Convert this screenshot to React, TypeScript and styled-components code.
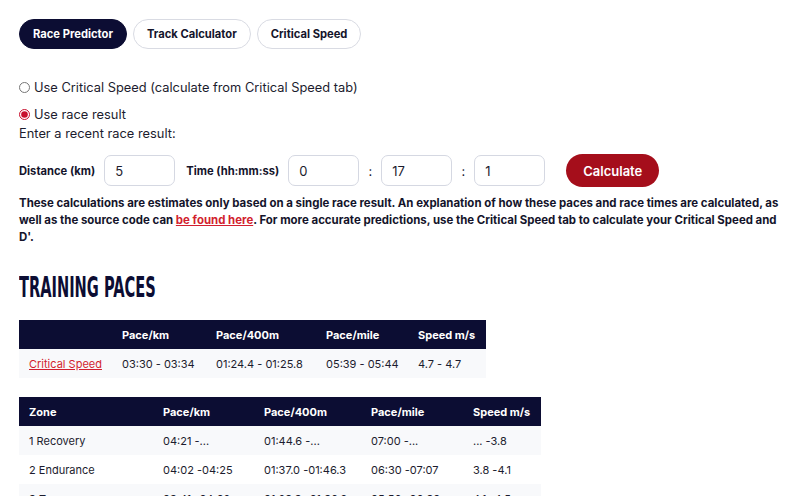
import React, { useState } from 'react';
import styled, { createGlobalStyle } from 'styled-components';

const GlobalStyle = createGlobalStyle`
  body {
    margin: 0;
    background: #ffffff;
    font-family: Inter, "Noto Sans", sans-serif;
    color: #14142b;
  }
`;

const Page = styled.div`
  padding: 19px 21px 0 19px;
  width: 800px;
  box-sizing: border-box;
`;

const Tabs = styled.div`
  display: flex;
  gap: 6px;
`;

const Tab = styled.button<{ active?: boolean }>`
  height: 30px;
  padding: 0 13px;
  border-radius: 15px;
  border: 1px solid ${p => (p.active ? '#0c0d33' : '#d9dbe3')};
  background: ${p => (p.active ? '#0c0d33' : '#ffffff')};
  color: ${p => (p.active ? '#ffffff' : '#14142b')};
  font-family: Inter, sans-serif;
  font-weight: 700;
  font-size: 11.2px;
  cursor: pointer;
`;

const Options = styled.div`
  margin-top: 28px;
  display: flex;
  flex-direction: column;
  gap: 6px;
`;

const RadioLabel = styled.label`
  display: flex;
  align-items: center;
  gap: 4px;
  font-size: 12.85px;
  line-height: 21px;
  color: #1c1c2e;

  input {
    margin: 0;
    width: 11px;
    height: 11px;
    accent-color: #c8102e;
  }
`;

const Prompt = styled.div`
  font-size: 12.85px;
  line-height: 17px;
  margin-top: -6px;
  color: #1c1c2e;
`;

const FormRow = styled.div`
  margin-top: 12px;
  display: flex;
  align-items: center;
`;

const Input = styled.input`
  width: 71px;
  height: 31px;
  box-sizing: border-box;
  border: 1px solid #d5d8e2;
  border-radius: 7px;
  padding: 0 10px;
  font-family: Inter, sans-serif;
  font-size: 13px;
  color: #1c1c2e;
  margin: 0;
`;

const FieldLabel = styled.span`
  font-size: 11.2px;
  font-weight: 700;
  margin-right: 9px;

  ${Input} + & {
    margin-left: 11px;
  }
`;

const Colon = styled.span`
  font-size: 13px;
  width: 22px;
  text-align: center;
`;

const Calculate = styled.button`
  margin-left: 21px;
  height: 33px;
  padding: 0 17px;
  border: none;
  border-radius: 17px;
  background: #a50e1b;
  color: #ffffff;
  font-family: Inter, sans-serif;
  font-size: 13px;
  font-weight: 600;
  cursor: pointer;
`;

const Note = styled.p`
  margin: 8px 0 0;
  font-size: 11.45px;
  font-weight: 700;
  line-height: 17px;
  color: #14142b;

  a {
    color: #d21f2f;
    text-decoration: underline;
  }
`;

const Heading = styled.h2`
  margin: 28px 0 0;
  font-family: "DejaVu Sans Condensed", "DejaVu Sans", sans-serif;
  font-stretch: condensed;
  font-weight: 700;
  font-size: 28px;
  line-height: 28px;
  color: #0c0d33;
  transform: scaleX(0.58);
  transform-origin: left center;
  white-space: nowrap;
`;

const Table = styled.table<{ gapTop: number }>`
  margin-top: ${p => p.gapTop}px;
  border-collapse: collapse;
  table-layout: fixed;
  font-size: 11px;
  white-space: nowrap;

  th {
    background: #0c0d33;
    color: #ffffff;
    font-weight: 700;
    text-align: left;
    height: 29px;
    padding: 0 10px;
  }

  td {
    height: 29px;
    padding: 0 10px;
    color: #1c1c2e;
  }

  tbody tr:nth-child(odd) td {
    background: #f8f9fb;
  }

  a {
    color: #d21f2f;
    text-decoration: underline;
  }
`;

const zones = [
  ['1 Recovery', '04:21 -...', '01:44.6 -...', '07:00 -...', '... -3.8'],
  ['2 Endurance', '04:02 -04:25', '01:37.0 -01:46.3', '06:30 -07:07', '3.8 -4.1'],
  ['3 Tempo', '03:41 -04:02', '01:28.3 -01:36.9', '05:56 -06:30', '4.1 -4.5'],
];

const csCols = [93, 94, 110, 92, 78];
const zoneCols = [134, 101, 107, 102, 78];

const Cols = ({ widths }: { widths: number[] }) => (
  <colgroup>
    {widths.map((w, i) => (
      <col key={i} style={{ width: w }} />
    ))}
  </colgroup>
);

export default function App() {
  const [mode, setMode] = useState('race');

  return (
    <Page>
      <GlobalStyle />
      <Tabs>
        <Tab active>Race Predictor</Tab>
        <Tab>Track Calculator</Tab>
        <Tab>Critical Speed</Tab>
      </Tabs>

      <Options>
        <RadioLabel>
          <input type="radio" checked={mode === 'cs'} onChange={() => setMode('cs')} />
          Use Critical Speed (calculate from Critical Speed tab)
        </RadioLabel>
        <RadioLabel>
          <input type="radio" checked={mode === 'race'} onChange={() => setMode('race')} />
          Use race result
        </RadioLabel>
        <Prompt>Enter a recent race result:</Prompt>
      </Options>

      <FormRow>
        <FieldLabel>Distance (km)</FieldLabel>
        <Input defaultValue="5" />
        <FieldLabel>Time (hh:mm:ss)</FieldLabel>
        <Input defaultValue="0" />
        <Colon>:</Colon>
        <Input defaultValue="17" />
        <Colon>:</Colon>
        <Input defaultValue="1" />
        <Calculate>Calculate</Calculate>
      </FormRow>

      <Note>
        These calculations are estimates only based on a single race result. An explanation of how these paces and race
        times are calculated, as well as the source code can <a href="#">be found here</a>. For more accurate
        predictions, use the Critical Speed tab to calculate your Critical Speed and D'.
      </Note>

      <Heading>TRAINING PACES</Heading>

      <Table gapTop={18} style={{ width: csCols.reduce((a, b) => a + b, 0) }}>
        <Cols widths={csCols} />
        <thead>
          <tr>
            <th></th>
            <th>Pace/km</th>
            <th>Pace/400m</th>
            <th>Pace/mile</th>
            <th>Speed m/s</th>
          </tr>
        </thead>
        <tbody>
          <tr>
            <td><a href="#">Critical Speed</a></td>
            <td>03:30 - 03:34</td>
            <td>01:24.4 - 01:25.8</td>
            <td>05:39 - 05:44</td>
            <td>4.7 - 4.7</td>
          </tr>
        </tbody>
      </Table>

      <Table gapTop={19} style={{ width: zoneCols.reduce((a, b) => a + b, 0) }}>
        <Cols widths={zoneCols} />
        <thead>
          <tr>
            <th>Zone</th>
            <th>Pace/km</th>
            <th>Pace/400m</th>
            <th>Pace/mile</th>
            <th>Speed m/s</th>
          </tr>
        </thead>
        <tbody>
          {zones.map(z => (
            <tr key={z[0]}>
              {z.map((c, i) => (
                <td key={i}>{c}</td>
              ))}
            </tr>
          ))}
        </tbody>
      </Table>
    </Page>
  );
}
